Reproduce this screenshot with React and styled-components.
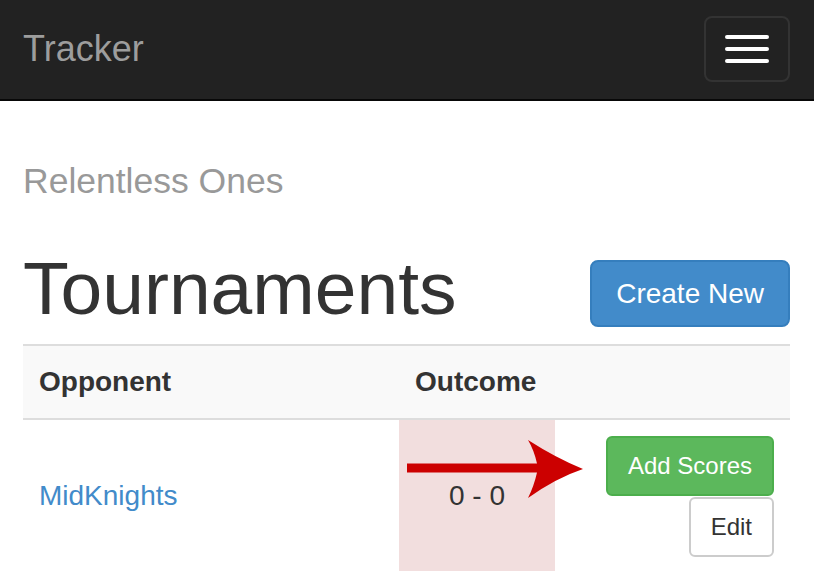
import React from "react";
import styled, { createGlobalStyle } from "styled-components";

const GlobalStyle = createGlobalStyle`
  html, body {
    margin: 0;
    padding: 0;
    overflow: hidden;
    background: #fff;
  }
  body {
    font-family: "Liberation Sans", Helvetica, Arial, sans-serif;
    font-size: 28px;
    color: #333;
  }
  * { box-sizing: border-box; }
`;

const Navbar = styled.nav`
  height: 101px;
  background: #222;
  border-bottom: 2px solid #080808;
  display: flex;
  align-items: center;
  justify-content: space-between;
  padding: 0 24px 0 23px;
`;

const Brand = styled.a`
  font-size: 36px;
  line-height: 1;
  color: #9d9d9d;
  text-decoration: none;
  margin-top: -2px;
`;

const Toggle = styled.button`
  width: 86px;
  height: 66px;
  margin-top: -2px;
  background: transparent;
  border: 2px solid #333;
  border-radius: 8px;
  display: flex;
  flex-direction: column;
  align-items: center;
  justify-content: center;
  gap: 8px;
  padding: 0;
`;

const Bar = styled.span`
  display: block;
  width: 44px;
  height: 4px;
  border-radius: 2px;
  background: #fff;
`;

const Main = styled.main`
  padding: 63px 24px 0 23px;
`;

const Subtitle = styled.h4`
  margin: 0;
  font-size: 35.5px;
  line-height: 1;
  font-weight: normal;
  color: #999;
`;

const Header = styled.div`
  display: flex;
  justify-content: space-between;
  align-items: flex-start;
  margin-top: 52px;
  height: 92px;
`;

const Title = styled.h1`
  margin: 0;
  font-size: 75px;
  line-height: 1;
  font-weight: normal;
  color: #333;
  margin-top: -1px;
`;

const Button = styled.button`
  font-family: inherit;
  font-size: ${p => (p.$small ? "24px" : "28px")};
  line-height: ${p => (p.$small ? "36px" : "39px")};
  padding: ${p => (p.$small ? "10px 20px" : "12px 24px")};
  border-radius: ${p => (p.$small ? "6px" : "8px")};
  border: 2px solid ${p => p.$border};
  background: ${p => p.$bg};
  color: ${p => p.$color};
  cursor: pointer;
  white-space: nowrap;
`;

const CreateButton = styled(Button)`
  margin-top: 8px;
`;

const TableWrap = styled.div`
  position: relative;
`;

const Table = styled.table`
  width: 100%;
  border-collapse: collapse;
  border-top: 2px solid #ddd;
`;

const Th = styled.th`
  text-align: left;
  font-weight: bold;
  padding: 16px 16px;
  line-height: 40px;
  background: #f9f9f9;
  border-bottom: 2px solid #ddd;
  width: ${p => p.$w};
`;

const Td = styled.td`
  padding: 16px;
  line-height: 40px;
  vertical-align: middle;
  text-align: ${p => p.$align || "left"};
  background: ${p => p.$bg || "transparent"};
`;

const Link = styled.a`
  color: #428bca;
  text-decoration: none;
`;

const Actions = styled.div`
  display: flex;
  flex-direction: column;
  align-items: flex-end;
  gap: 1px;
`;

const Arrow = styled.svg`
  position: absolute;
  left: 383px;
  top: 94px;
  width: 180px;
  height: 62px;
  overflow: visible;
`;

export default function App() {
  return (
    <>
      <GlobalStyle />
      <Navbar>
        <Brand href="#">Tracker</Brand>
        <Toggle aria-label="Toggle navigation">
          <Bar />
          <Bar />
          <Bar />
        </Toggle>
      </Navbar>
      <Main>
        <Subtitle>Relentless Ones</Subtitle>
        <Header>
          <Title>Tournaments</Title>
          <CreateButton $bg="#428bca" $border="#357ebd" $color="#fff">
            Create New
          </CreateButton>
        </Header>
        <TableWrap>
          <Table>
            <thead>
              <tr>
                <Th $w="376px">Opponent</Th>
                <Th $w="156px">Outcome</Th>
                <Th />
              </tr>
            </thead>
            <tbody>
              <tr>
                <Td>
                  <Link href="#">MidKnights</Link>
                </Td>
                <Td $align="center" $bg="#f2dede">0 - 0</Td>
                <Td>
                  <Actions>
                    <Button $small $bg="#5cb85c" $border="#4cae4c" $color="#fff">
                      Add Scores
                    </Button>
                    <Button $small $bg="#fff" $border="#ccc" $color="#333">
                      Edit
                    </Button>
                  </Actions>
                </Td>
              </tr>
            </tbody>
          </Table>
          <Arrow viewBox="0 0 180 62">
            <path
              d="M1,25.5 L131,25.5 Q128,12 122,2 Q150,20 177,31 Q150,40 122,60 Q128,48 131,34.5 L1,34.5 Z"
              fill="#cc0000"
            />
          </Arrow>
        </TableWrap>
      </Main>
    </>
  );
}
